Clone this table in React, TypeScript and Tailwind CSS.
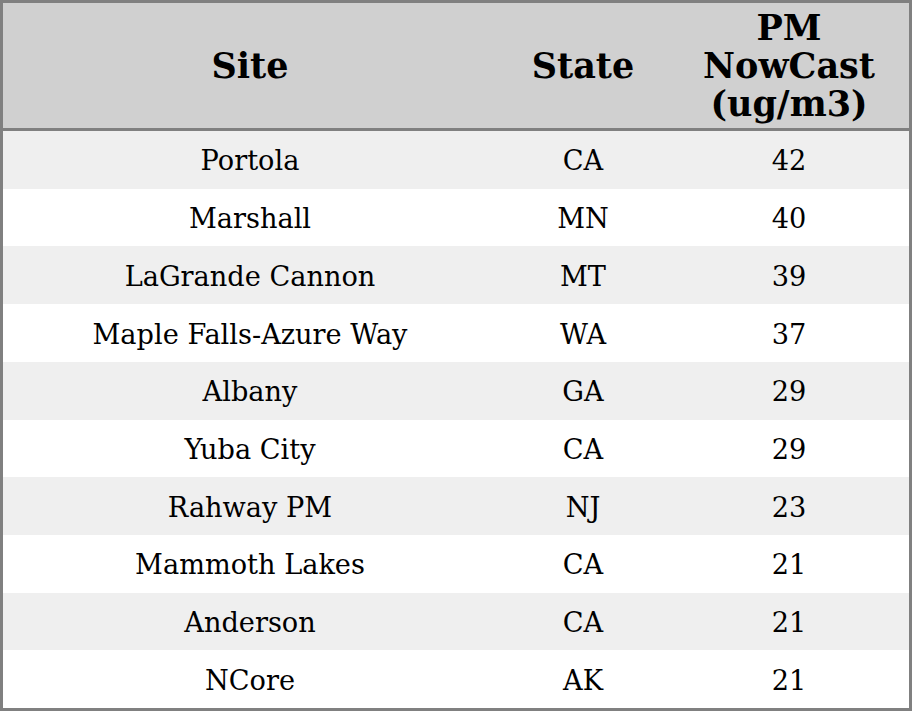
import React from "react";

const rows: [string, string, string][] = [
  ["Portola", "CA", "42"],
  ["Marshall", "MN", "40"],
  ["LaGrande Cannon", "MT", "39"],
  ["Maple Falls-Azure Way", "WA", "37"],
  ["Albany", "GA", "29"],
  ["Yuba City", "CA", "29"],
  ["Rahway PM", "NJ", "23"],
  ["Mammoth Lakes", "CA", "21"],
  ["Anderson", "CA", "21"],
  ["NCore", "AK", "21"],
];

export default function App() {
  return (
    <div className="w-[912px] h-[711px] bg-white" style={{ fontFamily: '"DejaVu Serif", serif' }}>
      <div className="w-[912px] h-[711px] border-[3px] border-[#808080] flex flex-col text-black">
        <div className="h-[128px] bg-[#d0d0d0] border-b-[3px] border-[#808080] grid grid-cols-[494px_172px_240px] items-center text-center font-bold text-[35px] leading-[38px]">
          <div>Site</div>
          <div>State</div>
          <div>PM<br />NowCast<br />(ug/m3)</div>
        </div>
        <div className="flex-1 grid grid-rows-10">
          {rows.map((r, i) => (
            <div
              key={i}
              className={`grid grid-cols-[494px_172px_240px] items-center text-center text-[27.2px] pt-[4px] ${i % 2 === 0 ? "bg-[#efefef]" : "bg-white"}`}
            >
              <div>{r[0]}</div>
              <div>{r[1]}</div>
              <div>{r[2]}</div>
            </div>
          ))}
        </div>
      </div>
    </div>
  );
}
